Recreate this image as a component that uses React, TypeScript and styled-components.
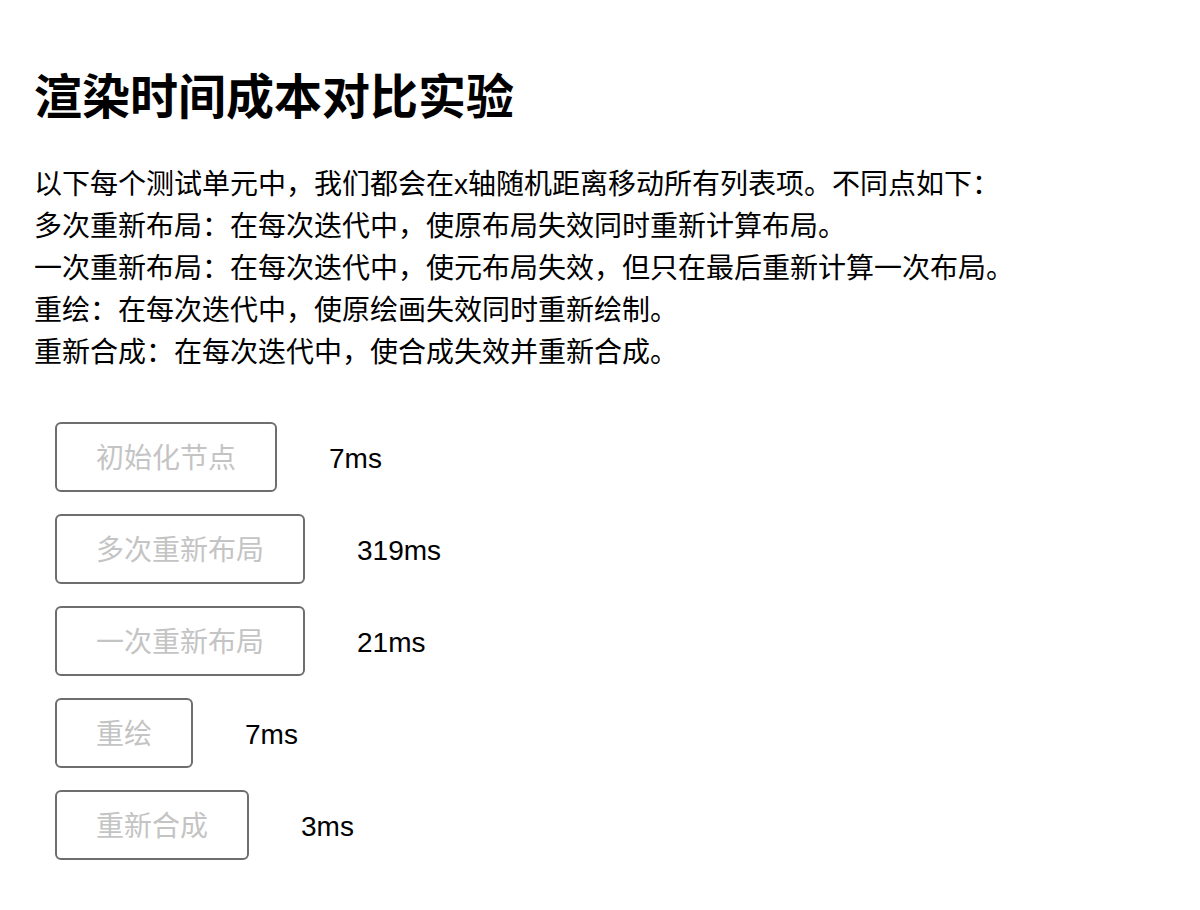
import React from "react";
import styled, { createGlobalStyle } from "styled-components";

const GlobalStyle = createGlobalStyle`
  html, body {
    margin: 0;
    padding: 0;
    background: #ffffff;
  }
  body {
    font-family: "Liberation Sans", "Noto Sans CJK SC", sans-serif;
    color: #000000;
  }
`;

const Page = styled.div`
  padding: 69px 34px 40px 34px;
`;

const Title = styled.h1`
  margin: 0 0 37px 0;
  font-size: 48px;
  line-height: 58px;
  font-weight: 700;
  font-family: "Liberation Sans", "Noto Sans CJK SC", sans-serif;
`;

const Description = styled.div`
  font-size: 28px;
  line-height: 42px;
`;

const Line = styled.div``;

const Tests = styled.div`
  display: flex;
  flex-direction: column;
  gap: 22px;
  margin-top: 48px;
  padding-left: 21px;
`;

const Row = styled.div`
  display: flex;
  align-items: center;
  gap: 52px;
`;

const TestButton = styled.button`
  box-sizing: border-box;
  height: 70px;
  padding: 4px 39px 0 39px;
  border: 2px solid #6e6e6e;
  border-radius: 6px;
  background: #ffffff;
  color: #c4c4c4;
  font-family: "Liberation Sans", "Noto Sans CJK SC", sans-serif;
  font-size: 28px;
  line-height: 1;
  cursor: default;
`;

const Time = styled.span`
  padding-top: 4px;
  font-size: 28px;
  line-height: 1;
  color: #000000;
`;

const lines = [
  "以下每个测试单元中，我们都会在x轴随机距离移动所有列表项。不同点如下：",
  "多次重新布局：在每次迭代中，使原布局失效同时重新计算布局。",
  "一次重新布局：在每次迭代中，使元布局失效，但只在最后重新计算一次布局。",
  "重绘：在每次迭代中，使原绘画失效同时重新绘制。",
  "重新合成：在每次迭代中，使合成失效并重新合成。",
];

const tests = [
  { label: "初始化节点", time: "7ms" },
  { label: "多次重新布局", time: "319ms" },
  { label: "一次重新布局", time: "21ms" },
  { label: "重绘", time: "7ms" },
  { label: "重新合成", time: "3ms" },
];

export default function App() {
  return (
    <>
      <GlobalStyle />
      <Page>
        <Title>渲染时间成本对比实验</Title>
        <Description>
          {lines.map((l) => (
            <Line key={l}>{l}</Line>
          ))}
        </Description>
        <Tests>
          {tests.map((t) => (
            <Row key={t.label}>
              <TestButton disabled>{t.label}</TestButton>
              <Time>{t.time}</Time>
            </Row>
          ))}
        </Tests>
      </Page>
    </>
  );
}
